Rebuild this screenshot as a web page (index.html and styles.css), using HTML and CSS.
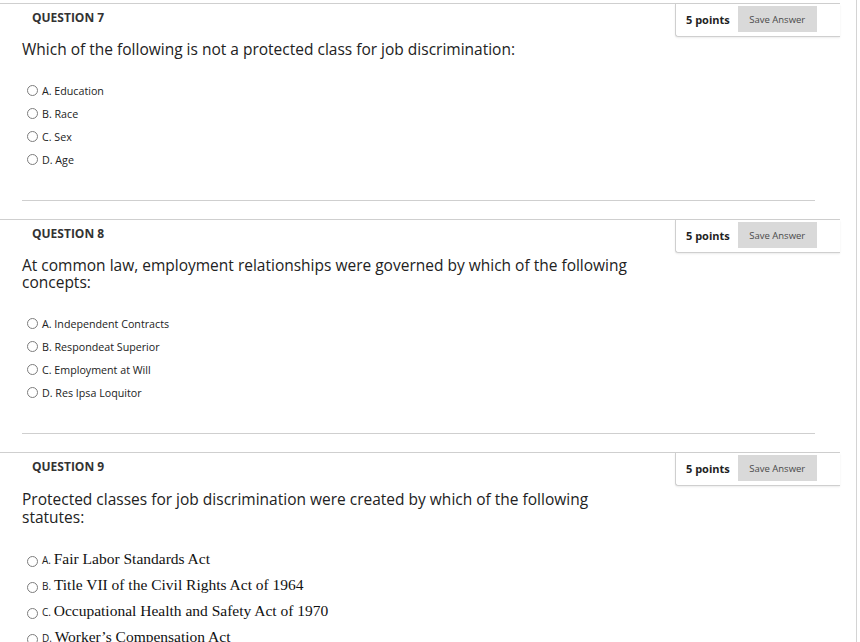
FILE: index.html
```html
<!DOCTYPE html>
<html>
<head>
<meta charset="utf-8">
<link rel="stylesheet" href="styles.css">
</head>
<body>
<div class="page">
  <div class="questions">
    <section class="question">
      <div class="q-row">
        <div class="q-main">
          <h3 class="q-title">QUESTION 7</h3>
          <p class="q-text">Which of the following is not a protected class for job discrimination:</p>
          <ul class="options">
            <li class="option"><span class="radio"></span><span>A. Education</span></li>
            <li class="option"><span class="radio"></span><span>B. Race</span></li>
            <li class="option"><span class="radio"></span><span>C. Sex</span></li>
            <li class="option"><span class="radio"></span><span>D. Age</span></li>
          </ul>
        </div>
        <div class="points-box"><span class="points">5 points</span><button class="save-btn">Save Answer</button></div>
      </div>
      <hr class="q-divider">
    </section>
    <section class="question">
      <div class="q-row">
        <div class="q-main">
          <h3 class="q-title">QUESTION 8</h3>
          <p class="q-text">At common law, employment relationships were governed by which of the following concepts:</p>
          <ul class="options">
            <li class="option"><span class="radio"></span><span>A. Independent Contracts</span></li>
            <li class="option"><span class="radio"></span><span>B. Respondeat Superior</span></li>
            <li class="option"><span class="radio"></span><span>C. Employment at Will</span></li>
            <li class="option"><span class="radio"></span><span>D. Res Ipsa Loquitor</span></li>
          </ul>
        </div>
        <div class="points-box"><span class="points">5 points</span><button class="save-btn">Save Answer</button></div>
      </div>
      <hr class="q-divider">
    </section>
    <section class="question">
      <div class="q-row">
        <div class="q-main">
          <h3 class="q-title">QUESTION 9</h3>
          <p class="q-text q-text-tall">Protected classes for job discrimination were created by which of the following statutes:</p>
          <ul class="options options-serif">
            <li class="option"><span class="radio"></span><span class="label"><span class="letter">A.</span> <span class="serif">Fair Labor Standards Act</span></span></li>
            <li class="option"><span class="radio"></span><span class="label"><span class="letter">B.</span> <span class="serif">Title VII of the Civil Rights Act of 1964</span></span></li>
            <li class="option"><span class="radio"></span><span class="label"><span class="letter">C.</span> <span class="serif">Occupational Health and Safety Act of 1970</span></span></li>
            <li class="option"><span class="radio"></span><span class="label"><span class="letter">D.</span> <span class="serif">Worker’s Compensation Act</span></span></li>
          </ul>
        </div>
        <div class="points-box"><span class="points">5 points</span><button class="save-btn">Save Answer</button></div>
      </div>
    </section>
  </div>
</div>
</body>
</html>
```

FILE: styles.css
```css
html, body {
  margin: 0;
  padding: 0;
  background: #fff;
  height: 100%;
  overflow: hidden;
}
body {
  font-family: "Open Sans", "Liberation Sans", sans-serif;
  color: #222;
}
.page {
  width: 856px;
  height: 100%;
  border-right: 1px solid #d4d4d4;
  padding-top: 3px;
  box-sizing: content-box;
}
.questions {
  width: 840px;
}
.question {
  border-top: 1px solid #cfcfcf;
}
.q-row {
  display: flex;
  align-items: flex-start;
}
.q-main {
  flex: 1;
  min-width: 0;
}
.q-title {
  margin: 0;
  padding: 6px 0 0 32px;
  font-size: 12px;
  line-height: 16px;
  font-weight: 700;
  color: #333;
}
.q-text {
  margin: 15px 0 0 22px;
  max-width: 625px;
  font-size: 15.5px;
  line-height: 17px;
  color: #222;
}
.q-text-tall {
  line-height: 18px;
}
.options {
  list-style: none;
  margin: 21px 0 0 0;
  padding: 0 0 0 27px;
}
.option {
  display: flex;
  align-items: center;
  height: 23px;
  font-size: 10.7px;
  color: #222;
}
.radio {
  width: 11px;
  height: 11px;
  border: 1px solid #7d7d7d;
  border-radius: 50%;
  box-sizing: border-box;
  margin-right: 4px;
  flex: none;
}
.options-serif {
  margin-top: 20px;
}
.options-serif .option {
  height: 26px;
}
.options-serif .radio {
  margin-top: 5px;
}
.letter {
  font-size: 10px;
}
.serif {
  font-family: "Liberation Serif", "Times New Roman", serif;
  font-size: 15.5px;
  color: #111;
}
.points-box {
  display: flex;
  align-items: center;
  gap: 8px;
  padding: 2px 25px 4px 10px;
  border-left: 1px solid #cfcfcf;
  border-bottom: 1px solid #cfcfcf;
  border-bottom-left-radius: 3px;
  box-shadow: 0 1px 2px rgba(0,0,0,0.08);
  width: 165px;
  box-sizing: border-box;
}
.points {
  font-size: 11px;
  font-weight: 700;
  color: #222;
  white-space: nowrap;
  flex: 1;
}
.save-btn {
  width: 79px;
  height: 26px;
  border: none;
  background: #d9d9d9;
  font-family: "Open Sans", "Liberation Sans", sans-serif;
  font-size: 9.5px;
  color: #4a4a4a;
  padding: 0;
  flex: none;
}
.q-divider {
  border: none;
  border-top: 1px solid #cfcfcf;
  margin: 29px 25px 18px 22px;
  height: 0;
}
```
